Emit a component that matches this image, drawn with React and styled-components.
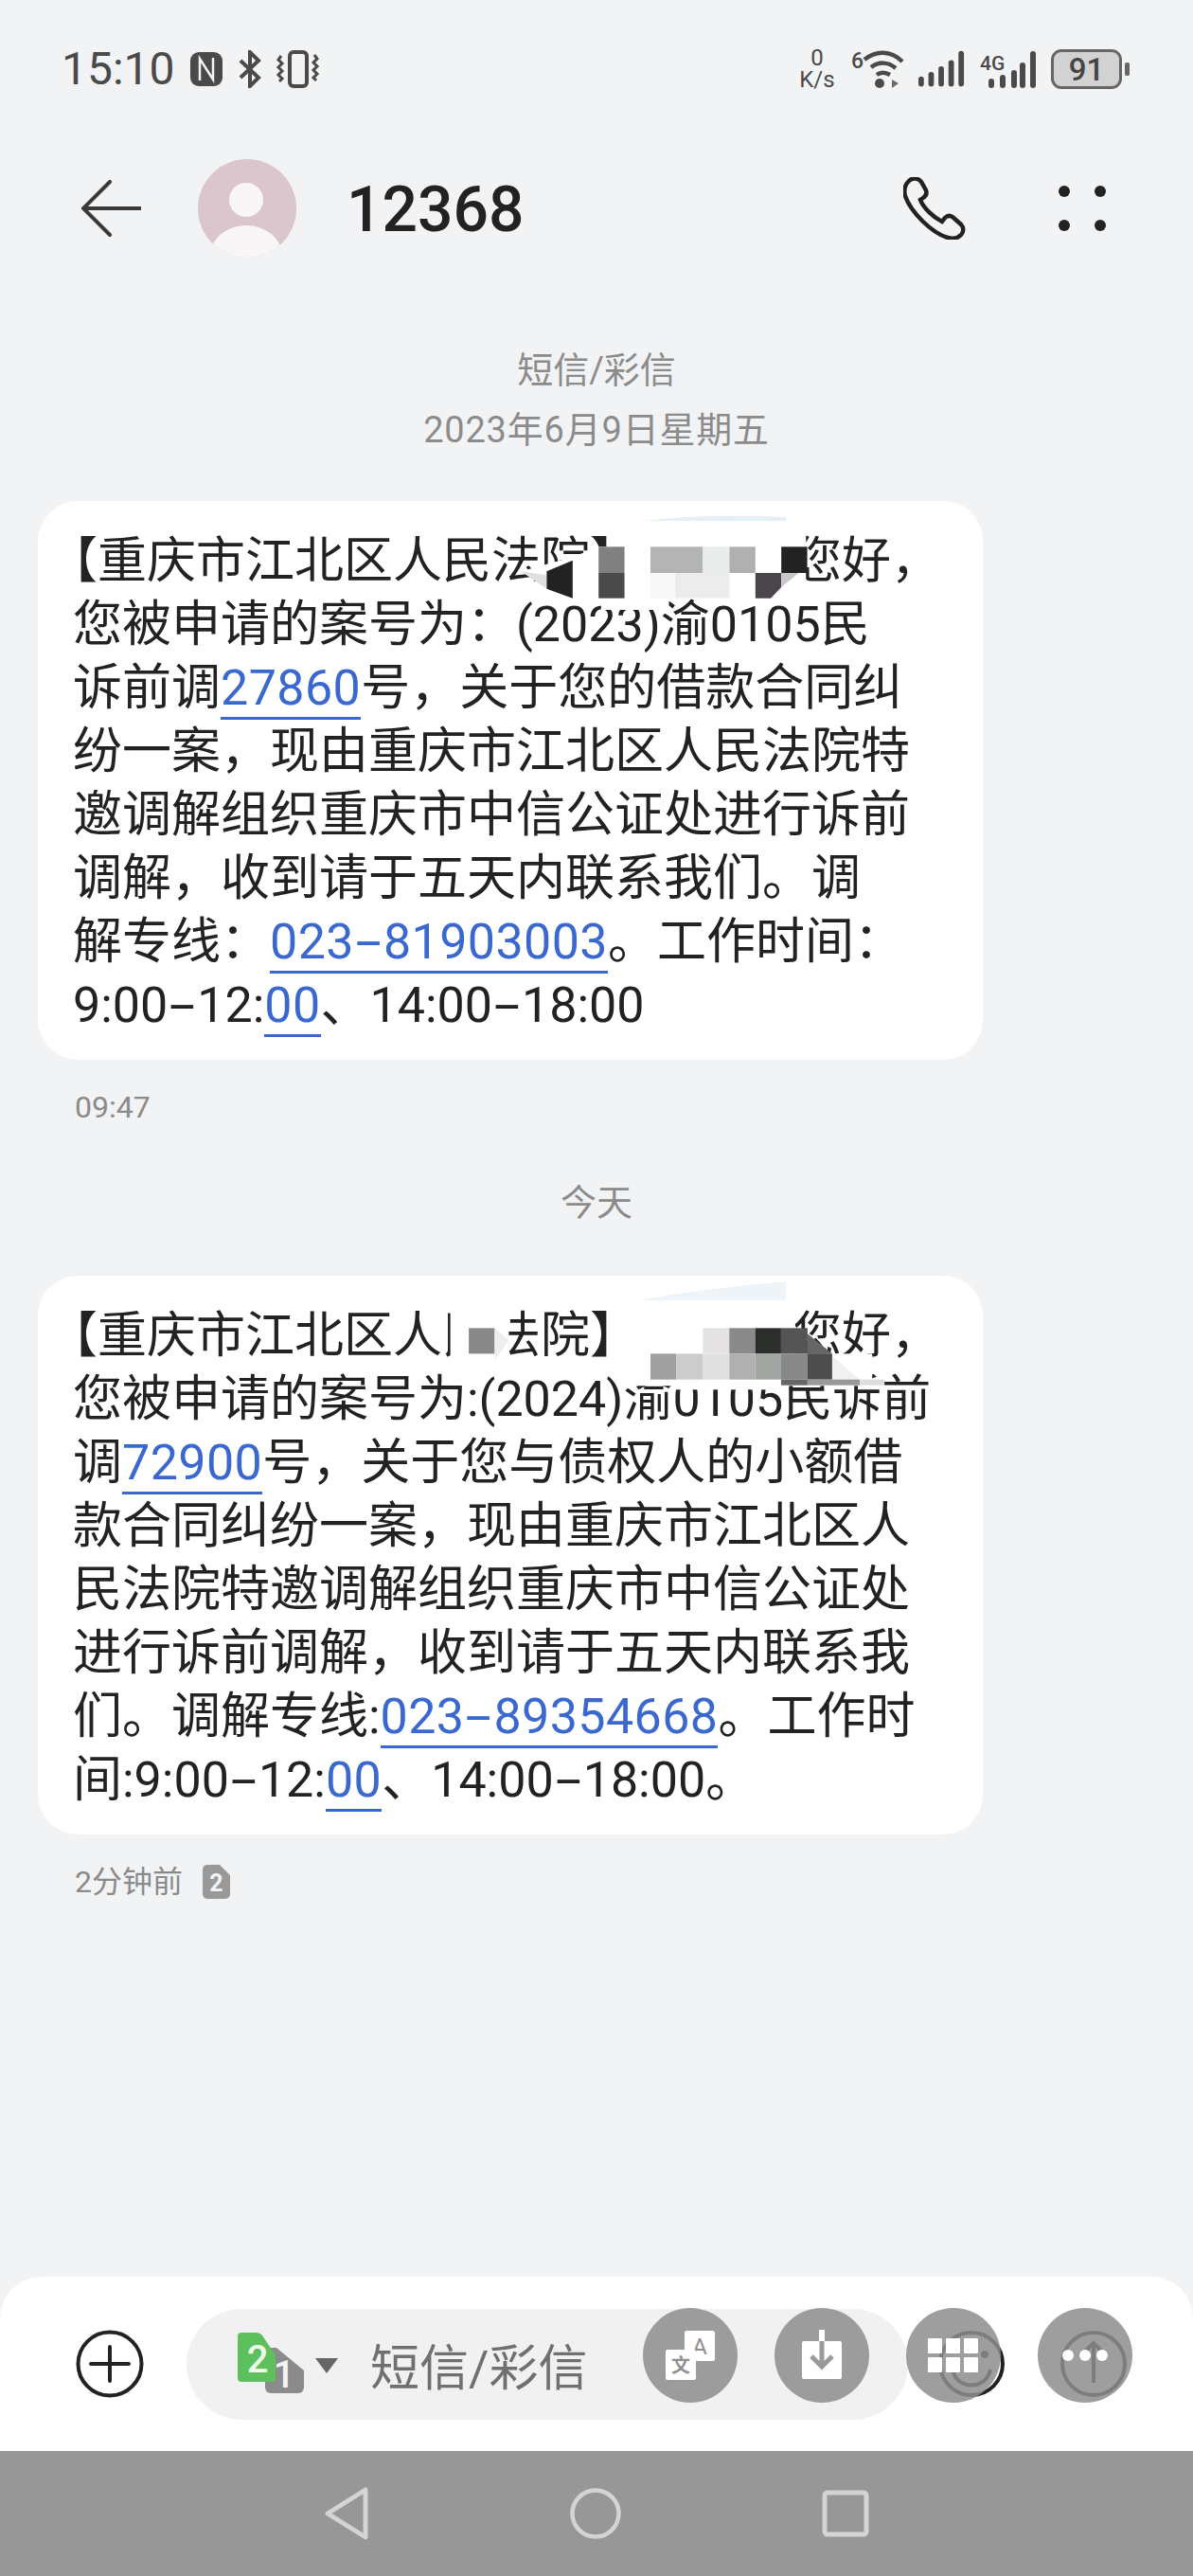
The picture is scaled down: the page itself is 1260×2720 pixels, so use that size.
import React from "react";
import styled, { createGlobalStyle } from "styled-components";

const GlobalStyle = createGlobalStyle`
  html, body {
    margin: 0;
    padding: 0;
    background: #f2f3f5;
  }
`;

const Screen = styled.div`
  width: 1260px;
  height: 2720px;
  display: flex;
  flex-direction: column;
  background: #f2f3f5;
  font-family: Roboto, "Noto Sans CJK SC", sans-serif;
  overflow: hidden;
`;

const StatusBar = styled.div`
  height: 146px;
  flex: none;
  display: flex;
  align-items: center;
  justify-content: space-between;
  padding: 0 67px 0 65px;
  color: #4a4a4a;
`;

const StatusGroup = styled.div`
  display: flex;
  align-items: center;
  gap: ${(p) => p.$gap}px;
`;

const Clock = styled.span`
  font-size: 48px;
  line-height: 50px;
`;

const NetSpeed = styled.div`
  width: 42px;
  display: flex;
  flex-direction: column;
  align-items: center;
  font-size: 24px;
  line-height: 23px;
`;

const Battery = styled.div`
  display: flex;
  align-items: center;
  gap: 3px;
`;

const BatteryBody = styled.div`
  width: 75px;
  height: 42px;
  box-sizing: border-box;
  border: 3px solid #666;
  border-radius: 11px;
  background: #d2d2d2;
  display: flex;
  align-items: center;
  justify-content: center;
  font-size: 33px;
  font-weight: 500;
  color: #444;
`;

const BatteryNub = styled.div`
  width: 5px;
  height: 14px;
  border-radius: 2px;
  background: #666;
`;

const Header = styled.div`
  height: 148px;
  flex: none;
  display: flex;
  align-items: center;
  padding: 0 92px 0 86px;
`;

const Avatar = styled.svg`
  margin-left: 60px;
`;

const Title = styled.div`
  margin-left: 53px;
  padding-top: 3px;
  font-size: 66px;
  font-weight: 500;
  color: #222;
`;

const HeaderActions = styled.div`
  margin-left: auto;
  display: flex;
  align-items: center;
  gap: 98px;
`;

const Thread = styled.div`
  display: flex;
  flex-direction: column;
  padding: 0 222px 0 40px;
`;

const Stamp = styled.div`
  margin-left: 273px;
  width: 634px;
  text-align: center;
  font-size: 38px;
  line-height: 63px;
  color: #8b8b8b;
  margin-top: ${(p) => p.$top || 0}px;
  letter-spacing: ${(p) => p.$spread || 0}px;
`;

const Bubble = styled.div`
  position: relative;
  box-sizing: border-box;
  height: 590px;
  margin-top: ${(p) => p.$top}px;
  padding: 30px 0 0 37px;
  border-radius: 42px;
  background: #fff;
`;

const Line = styled.div`
  font-size: 52px;
  line-height: 67px;
  color: #222;
  white-space: nowrap;
  text-spacing-trim: trim-start;
`;

const Hole = styled.span`
  display: inline-block;
  width: 162px;
`;

const Link = styled.span`
  color: #3b68cf;
  border-bottom: 3px solid #3b68cf;
  letter-spacing: 0.4px;
`;

const Dash = styled.span`
  display: inline-block;
  width: 31px;
  text-align: center;
  transform: scaleX(1.9);
`;

const Mosaic = styled.svg`
  position: absolute;
  left: ${(p) => p.$left}px;
  top: ${(p) => p.$top}px;
`;

const Meta = styled.div`
  display: flex;
  align-items: center;
  gap: 21px;
  margin: 30px 0 0 39px;
  font-size: 32px;
  line-height: 40px;
  color: #8a8a8a;
`;

const Composer = styled.div`
  position: relative;
  margin-top: auto;
  height: 184px;
  flex: none;
  display: flex;
  align-items: center;
  padding-left: 80px;
  border-radius: 44px 44px 0 0;
  background: #fff;
`;

const Pill = styled.div`
  width: 762px;
  height: 117px;
  margin: 0 31px 0 45px;
  padding-left: 54px;
  box-sizing: border-box;
  display: flex;
  align-items: center;
  gap: 34px;
  border-radius: 59px;
  background: #f1f1f1;
  font-size: 52px;
  color: #707070;
`;

const SendIcon = styled.svg`
  margin-left: 57px;
`;

const FloatingTools = styled.div`
  position: absolute;
  left: 679px;
  top: 33px;
  display: flex;
  gap: 39px;
`;

const ToolButton = styled.div`
  width: 100px;
  height: 100px;
  border-radius: 50%;
  background: rgba(141, 141, 141, 0.85);
  display: flex;
  align-items: center;
  justify-content: center;
`;

const NavBar = styled.div`
  height: 132px;
  flex: none;
  display: flex;
  align-items: center;
  justify-content: center;
  gap: 212px;
  background: #979797;
`;

const NfcIcon = () => (
  <svg width="36" height="38" viewBox="0 0 36 38">
    <rect x="1" y="1" width="34" height="36" rx="9" fill="#4a4a4a" />
    <path d="M11 31V8l14 22V7" fill="none" stroke="#f2f3f5" strokeWidth="2.5" />
  </svg>
);

const BluetoothIcon = () => (
  <svg width="25" height="40" viewBox="0 0 25 40">
    <path d="M3 11l19 18-9 9V2l9 9L3 29" fill="none" stroke="#4a4a4a" strokeWidth="4" />
  </svg>
);

const VibrateIcon = () => (
  <svg width="47" height="40" viewBox="0 0 47 40">
    <rect x="15" y="2" width="18" height="36" rx="4" fill="none" stroke="#4a4a4a" strokeWidth="4" />
    <path
      d="M6 6l-3 4 4 4-4 4 4 4-4 4 4 4-3 3M41 5l3 4-4 4 4 4-4 4 4 4-4 4 3 3"
      fill="none"
      stroke="#4a4a4a"
      strokeWidth="3"
    />
  </svg>
);

const WifiIcon = () => (
  <svg width="56" height="44" viewBox="0 0 56 44">
    <text x="0" y="21" fontFamily="Roboto, sans-serif" fontSize="23" fontWeight="500" fill="#4a4a4a">
      6
    </text>
    <path
      d="M14 12C26 2 42 2 54 14M21 20c8-6 18-6 26 1M27 28c4-3 9-3 14 0"
      fill="none"
      stroke="#4a4a4a"
      strokeWidth="4.5"
    />
    <circle cx="30" cy="37" r="5" fill="#4a4a4a" />
    <path d="M43 33l7 4-7 5z" fill="#6a6a6a" />
  </svg>
);

const bars = [
  [3, 29, 11],
  [14, 24, 16],
  [25, 18, 22],
  [36, 11, 29],
  [47, 1, 39],
];

const SignalIcon = () => (
  <svg width="50" height="42" viewBox="0 0 52 42">
    {bars.map(([x, y, h]) => (
      <rect key={x} x={x - 3} y={y} width="6" height={h} rx="3" fill="#4a4a4a" />
    ))}
  </svg>
);

const Signal4gIcon = () => (
  <svg width="60" height="42" viewBox="0 0 60 42">
    <text x="0" y="22" fontFamily="Roboto, sans-serif" fontSize="21" fontWeight="500" fill="#4a4a4a">
      4G
    </text>
    <rect x="9" y="31" width="6" height="10" rx="3" fill="#4a4a4a" />
    <rect x="21" y="27" width="6" height="14" rx="3" fill="#4a4a4a" />
    <rect x="33" y="22" width="6" height="19" rx="3" fill="#4a4a4a" />
    <rect x="42" y="14" width="6" height="27" rx="3" fill="#4a4a4a" />
    <rect x="53" y="2" width="6" height="39" rx="3" fill="#4a4a4a" />
  </svg>
);

const BackArrow = () => (
  <svg width="63" height="60" viewBox="0 0 63 60">
    <path d="M30 2L2 30l28 28M2 30h60" fill="none" stroke="#3a3a3a" strokeWidth="4" strokeLinecap="round" />
  </svg>
);

const PhoneIcon = () => (
  <svg width="66" height="66" viewBox="0 0 66 66">
    <path
      d="M6 4C10 0 16 1 19 5L24 14C25 17 24 20 21 22L18 24C21 32 31 42 41 47L44 43C46 41 49 40 52 42L61 50C64 53 64 58 61 61C58 64 53 66 47 64C30 59 8 37 2 20C0 13 2 8 6 4Z"
      fill="none"
      stroke="#222"
      strokeWidth="4.5"
    />
  </svg>
);

const MoreIcon = () => (
  <svg width="50" height="48" viewBox="0 0 50 48">
    <circle cx="6" cy="6" r="6" fill="#222" />
    <circle cx="44" cy="6" r="6" fill="#222" />
    <circle cx="6" cy="42" r="6" fill="#222" />
    <circle cx="44" cy="42" r="6" fill="#222" />
  </svg>
);

const Mosaic1 = () => (
  <Mosaic $left={497} $top={11} width="326" height="118" viewBox="780 60 500 354" preserveAspectRatio="none">
    <path d="M1000 90Q1100 66 1230 78V90z" fill="#e6eff5" />
    <path d="M800 250L884 205L926 172H960V90H1262V335H1040V372H930V335H884L800 250z" fill="#fff" />
    <path d="M800 250L842 262V305z" fill="#e0e0e0" />
    <path d="M842 250L884 215V335L842 305z" fill="#222" />
    <rect x="926" y="172" width="42" height="83" fill="#808080" />
    <rect x="926" y="255" width="42" height="80" fill="#4a4a4a" />
    <rect x="1010" y="172" width="85" height="83" fill="#b4b4b4" />
    <rect x="1095" y="172" width="43" height="83" fill="#e8ecea" />
    <rect x="1138" y="172" width="42" height="83" fill="#b0b0b0" />
    <rect x="1010" y="255" width="40" height="80" fill="#f8f8f8" />
    <rect x="1050" y="255" width="88" height="80" fill="#ececec" />
    <path d="M1180 255H1222V300L1205 335H1180z" fill="#4a454a" />
    <rect x="1222" y="172" width="42" height="83" fill="#222" />
    <path d="M1222 255H1250L1222 300z" fill="#c8c8c8" />
  </Mosaic>
);

const Mosaic2 = () => (
  <Mosaic $left={-10} $top={-7} width="1020" height="134" viewBox="0 0 1568 402" preserveAspectRatio="none">
    <path d="M990 100Q1100 60 1230 40V100z" fill="#eef4f8" />
    <rect x="685" y="130" width="95" height="160" fill="#fff" />
    <rect x="715" y="187" width="42" height="81" fill="#888" />
    <path d="M757 187L780 225 757 290z" fill="#eee" />
    <rect x="968" y="100" width="277" height="170" fill="#fff" />
    <rect x="968" y="268" width="402" height="102" fill="#fff" />
    <rect x="1050" y="350" width="170" height="32" fill="#fff" />
    <rect x="1095" y="187" width="43" height="81" fill="#e5e2e3" />
    <rect x="1138" y="187" width="42" height="81" fill="#8a8a8a" />
    <rect x="1180" y="187" width="42" height="81" fill="#2c2e2c" />
    <rect x="1222" y="187" width="43" height="81" fill="#555" />
    <path d="M1265 205L1305 268H1265z" fill="#666" />
    <rect x="1010" y="268" width="42" height="82" fill="#a0a0a0" />
    <rect x="1052" y="268" width="43" height="82" fill="#ccc" />
    <rect x="1095" y="268" width="43" height="82" fill="#e0e0e0" />
    <rect x="1138" y="268" width="42" height="82" fill="#b0b0b0" />
    <rect x="1180" y="268" width="42" height="82" fill="#a0a5a2" />
    <rect x="1222" y="268" width="43" height="82" fill="#888" />
    <rect x="1265" y="268" width="40" height="82" fill="#4d4d4d" />
    <path d="M1305 275L1350 350H1305z" fill="#f0f0f0" />
    <rect x="1222" y="350" width="43" height="18" fill="#666" />
    <rect x="1265" y="350" width="85" height="18" fill="#999" />
    <rect x="1350" y="350" width="40" height="18" fill="#ddd" />
  </Mosaic>
);

const SimBadge = () => (
  <svg width="29" height="36" viewBox="0 0 29 36">
    <path d="M5 0H18L29 11V31a5 5 0 0 1-5 5H5a5 5 0 0 1-5-5V5a5 5 0 0 1 5-5z" fill="#999" />
    <text x="14.5" y="28" textAnchor="middle" fontFamily="Roboto, sans-serif" fontSize="25" fontWeight="700" fill="#f2f3f5">
      2
    </text>
  </svg>
);

const PlusIcon = () => (
  <svg width="72" height="72" viewBox="0 0 72 72">
    <circle cx="36" cy="36" r="33.5" fill="none" stroke="#222" strokeWidth="4" />
    <path d="M36 18v36M16 36h40" fill="none" stroke="#222" strokeWidth="4" strokeLinecap="round" />
  </svg>
);

const SimPicker = () => (
  <svg width="106" height="66" viewBox="0 0 106 66">
    <path d="M29 16H41L70 40V58a6 6 0 0 1-6 6H35a6 6 0 0 1-6-6z" fill="#8b8b8b" />
    <path d="M4 0H20Q25 0 28 6L40 24V49a3 3 0 0 1-3 3H4a4 4 0 0 1-4-4V4a4 4 0 0 1 4-4z" fill="#5cc05c" />
    <text x="21" y="42" textAnchor="middle" fontFamily="Roboto, sans-serif" fontSize="40" fontWeight="500" fill="#eefbe9">
      2
    </text>
    <text x="49" y="58" textAnchor="middle" fontFamily="Roboto, sans-serif" fontSize="40" fontWeight="500" fill="#f4f4f4">
      1
    </text>
    <path d="M82 27h24L94 43z" fill="#666" />
  </svg>
);

const SmileIcon = () => (
  <svg width="72" height="72" viewBox="0 0 72 72">
    <circle cx="36" cy="36" r="33" fill="none" stroke="#222" strokeWidth="4" />
    <circle cx="50" cy="26" r="4" fill="#222" />
    <path d="M16 42c4 22 36 22 40 0" fill="none" stroke="#222" strokeWidth="4" />
  </svg>
);

const SendGlyph = () => (
  <SendIcon width="72" height="72" viewBox="0 0 72 72">
    <circle cx="36" cy="36" r="33" fill="none" stroke="#222" strokeWidth="4" />
    <path d="M36 56V14M22 28l14-14 14 14" fill="none" stroke="#222" strokeWidth="4" />
  </SendIcon>
);

const TranslateTool = () => (
  <svg width="56" height="56" viewBox="0 0 56 56">
    <rect x="22" y="2" width="32" height="32" rx="2" fill="#fff" />
    <text x="38" y="27" textAnchor="middle" fontFamily="Roboto, sans-serif" fontSize="24" fill="#8f8f8f">
      A
    </text>
    <rect x="2" y="22" width="32" height="32" rx="2" fill="#fff" />
    <text x="18" y="46" textAnchor="middle" fontFamily="'Noto Sans CJK SC', sans-serif" fontSize="20" fontWeight="700" fill="#8f8f8f">
      文
    </text>
  </svg>
);

const ImportTool = () => (
  <svg width="46" height="54" viewBox="0 0 46 54">
    <rect x="2" y="12" width="42" height="40" rx="2" fill="#fff" />
    <rect x="20" y="0" width="6" height="12" fill="#fff" />
    <path d="M23 12V38M12 28l11 11 11-11" fill="none" stroke="#9a9a9a" strokeWidth="5" />
  </svg>
);

const GridTool = () => (
  <svg width="54" height="36" viewBox="0 0 54 36">
    {[0, 19, 38].map((x) =>
      [0, 20].map((y) => <rect key={`${x}-${y}`} x={x} y={y} width="15" height="16" rx="1" fill="#fff" />)
    )}
  </svg>
);

const DotsTool = () => (
  <svg width="50" height="14" viewBox="0 0 50 14">
    <circle cx="7" cy="7" r="6" fill="#fff" />
    <circle cx="25" cy="7" r="6" fill="#fff" />
    <circle cx="43" cy="7" r="6" fill="#fff" />
  </svg>
);

const NavBack = () => (
  <svg width="48" height="56" viewBox="0 0 48 56">
    <path d="M44 3V53L4 28z" fill="none" stroke="#d4d4d4" strokeWidth="5" strokeLinejoin="round" />
  </svg>
);

const NavHome = () => (
  <svg width="54" height="54" viewBox="0 0 54 54">
    <circle cx="27" cy="27" r="24.5" fill="none" stroke="#d4d4d4" strokeWidth="4.5" />
  </svg>
);

const NavRecent = () => (
  <svg width="50" height="50" viewBox="0 0 50 50">
    <rect x="3" y="3" width="44" height="44" rx="3" fill="none" stroke="#d4d4d4" strokeWidth="5" />
  </svg>
);

export default function App() {
  return (
    <Screen>
      <GlobalStyle />
      <StatusBar>
        <StatusGroup $gap={15}>
          <Clock>15:10</Clock>
          <NfcIcon />
          <BluetoothIcon />
          <VibrateIcon />
        </StatusGroup>
        <StatusGroup $gap={15}>
          <NetSpeed>
            <span>0</span>
            <span>K/s</span>
          </NetSpeed>
          <WifiIcon />
          <SignalIcon />
          <Signal4gIcon />
          <Battery>
            <BatteryBody>91</BatteryBody>
            <BatteryNub />
          </Battery>
        </StatusGroup>
      </StatusBar>

      <Header>
        <BackArrow />
        <Avatar width="104" height="104" viewBox="0 0 104 104">
          <defs>
            <clipPath id="avatarClip">
              <circle cx="52" cy="52" r="52" />
            </clipPath>
          </defs>
          <circle cx="52" cy="52" r="52" fill="#dac6cc" />
          <g clipPath="url(#avatarClip)">
            <circle cx="51" cy="43" r="18" fill="#f9f6f7" />
            <ellipse cx="51" cy="102" rx="38" ry="32" fill="#f9f6f7" />
          </g>
        </Avatar>
        <Title>12368</Title>
        <HeaderActions>
          <PhoneIcon />
          <MoreIcon />
        </HeaderActions>
      </Header>

      <Thread>
        <Stamp $top={66}>短信/彩信</Stamp>
        <Stamp $spread={0.8}>2023年6月9日星期五</Stamp>

        <Bubble $top={43}>
          <Line>
            【重庆市江北区人民法院】
            <Hole />
            您好，
          </Line>
          <Line>您被申请的案号为：(2023)渝0105民</Line>
          <Line>
            诉前调<Link>27860</Link>号，关于您的借款合同纠
          </Line>
          <Line>纷一案，现由重庆市江北区人民法院特</Line>
          <Line>邀调解组织重庆市中信公证处进行诉前</Line>
          <Line>调解，收到请于五天内联系我们。调</Line>
          <Line>
            解专线：
            <Link>
              023<Dash>-</Dash>81903003
            </Link>
            。工作时间：
          </Line>
          <Line>
            9:00<Dash>-</Dash>12:<Link>00</Link>、14:00<Dash>-</Dash>18:00
          </Line>
          <Mosaic1 />
        </Bubble>
        <Meta>09:47</Meta>

        <Stamp $top={50}>今天</Stamp>

        <Bubble $top={45}>
          <Line>
            【重庆市江北区人民法院】
            <Hole />
            您好，
          </Line>
          <Line>您被申请的案号为:(2024)渝0105民诉前</Line>
          <Line>
            调<Link>72900</Link>号，关于您与债权人的小额借
          </Line>
          <Line>款合同纠纷一案，现由重庆市江北区人</Line>
          <Line>民法院特邀调解组织重庆市中信公证处</Line>
          <Line>进行诉前调解，收到请于五天内联系我</Line>
          <Line>
            们。调解专线:
            <Link>
              023<Dash>-</Dash>89354668
            </Link>
            。工作时
          </Line>
          <Line>
            间:9:00<Dash>-</Dash>12:<Link>00</Link>、14:00<Dash>-</Dash>18:00。
          </Line>
          <Mosaic2 />
        </Bubble>
        <Meta>
          2分钟前
          <SimBadge />
        </Meta>
      </Thread>

      <Composer>
        <PlusIcon />
        <Pill>
          <SimPicker />
          短信/彩信
        </Pill>
        <SmileIcon />
        <SendGlyph />
        <FloatingTools>
          <ToolButton>
            <TranslateTool />
          </ToolButton>
          <ToolButton>
            <ImportTool />
          </ToolButton>
          <ToolButton>
            <GridTool />
          </ToolButton>
          <ToolButton>
            <DotsTool />
          </ToolButton>
        </FloatingTools>
      </Composer>

      <NavBar>
        <NavBack />
        <NavHome />
        <NavRecent />
      </NavBar>
    </Screen>
  );
}
